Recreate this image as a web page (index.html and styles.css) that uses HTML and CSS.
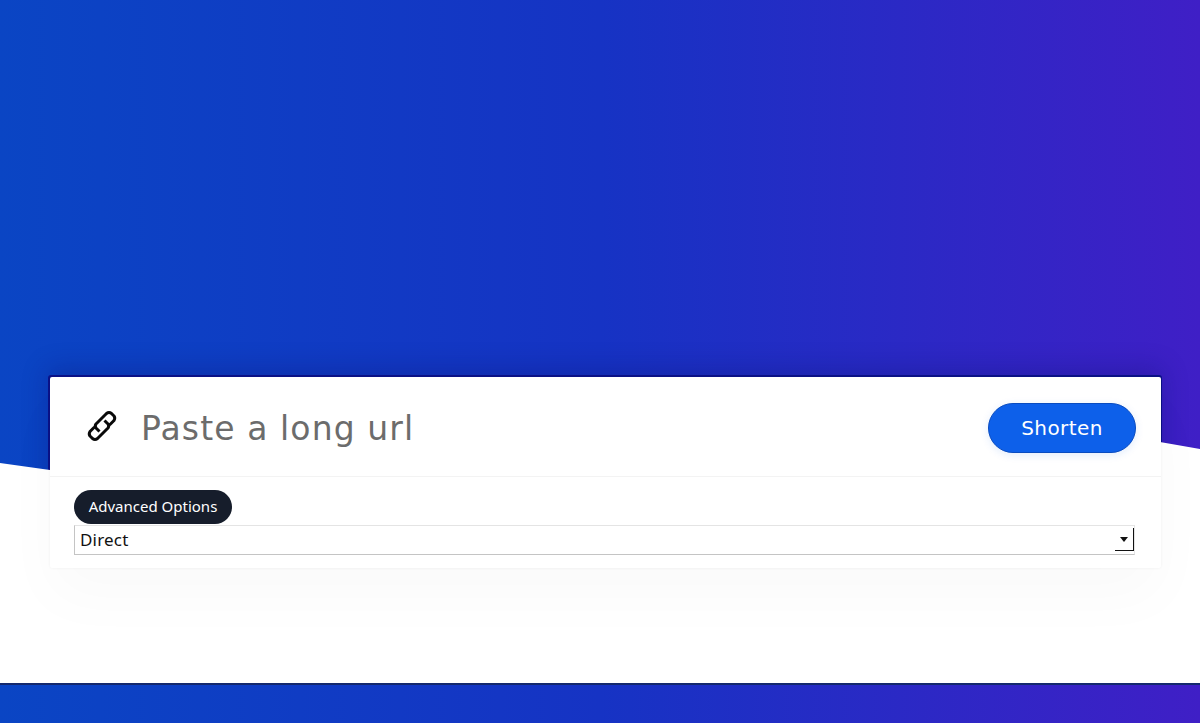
FILE: index.html
```html
<!DOCTYPE html>
<html lang="en">
<head>
    <meta charset="UTF-8">
    <meta name="viewport" content="width=device-width, initial-scale=1.0">
    <title>Shorten</title>
    <link rel="stylesheet" href="styles.css">
</head>
<body>
    <section class="hero">
        <span class="card-edge"></span>
        <svg class="wave" viewBox="0 0 1200 221" aria-hidden="true">
            <path d="M0 1 L50 8 C 300 40 900 -40 1160 -20 L1200 -13 L1200 221 L0 221 Z"/>
        </svg>
        <form class="card">
            <div class="url-row">
                <svg class="link-icon" viewBox="0 0 36 36" aria-hidden="true">
                    <path d="M25.5 17 L30 12.5 Q31.5 10 30 8 L27.5 5.5 Q25 3.5 22.5 5.5 L12 16 Q10.5 18 12 20 L15.5 23.5"/>
                    <path d="M10.5 19 L6 23.5 Q4.5 26 6 28 L8.5 30.5 Q11 32.5 13.5 30.5 L24 20 Q25.5 18 24 16 L20.5 12.5"/>
                </svg>
                <input class="url-input" type="text" placeholder="Paste a long url">
                <button class="shorten-btn" type="button">Shorten</button>
            </div>
            <div class="options">
                <button class="advanced-btn" type="button">Advanced Options</button>
                <div class="select-wrap">
                    <select class="type-select">
                        <option>Direct</option>
                    </select>
                    <span class="select-arrow"></span>
                </div>
            </div>
        </form>
    </section>
    <footer class="footer"></footer>
</body>
</html>
```

FILE: styles.css
```css
html, body {
    margin: 0;
    padding: 0;
}

body {
    height: 723px;
    overflow: hidden;
    background-color: white;
    font-family: "Noto Sans", sans-serif;
}

.hero {
    position: relative;
    height: 683px;
    box-sizing: border-box;
    padding: 377px 39px 0 50px;
    background: linear-gradient(90deg, #0a45c4 0%, #1633c4 50%, #3f1fc6 100%);
}

/* dark rim round the card, only shows over the blue */
.card-edge {
    position: absolute;
    left: 48px;
    top: 375px;
    width: 1114px;
    height: 120px;
    border-radius: 3px;
    background-color: #0c1288;
    box-shadow: 0 -6px 26px rgba(10, 15, 110, 0.3);
}

.wave {
    position: absolute;
    left: 0;
    top: 462px;
    width: 1200px;
    height: 221px;
    overflow: visible;
    fill: white;
}

.card {
    position: relative;
    height: 191px;
    box-sizing: border-box;
    background-color: white;
    border-radius: 2px;
    box-shadow: 0 0 3px rgba(0, 0, 0, 0.06), 0 30px 60px rgba(0, 0, 0, 0.025);
}

.url-row {
    display: flex;
    align-items: center;
    height: 100px;
    box-sizing: border-box;
    padding: 3px 25px 0 34px;
    border-bottom: 1px solid #f3f3f3;
}

.link-icon {
    width: 36px;
    height: 36px;
    flex: none;
    margin-top: -4px;
    fill: none;
    stroke: #0a0a0a;
    stroke-width: 3;
    stroke-linecap: butt;
    stroke-linejoin: round;
}

.url-input {
    flex: 1;
    min-width: 0;
    margin-left: 21px;
    padding: 0;
    border: none;
    outline: none;
    font-family: "DejaVu Sans", sans-serif;
    font-size: 33px;
    letter-spacing: 1.1px;
    color: #333;
}

.url-input::placeholder {
    color: #6c6c6c;
    opacity: 1;
}

.shorten-btn {
    width: 148px;
    height: 50px;
    flex: none;
    padding: 0 0 1px;
    border: 1px solid #0a4cc0;
    border-radius: 25px;
    background-color: #0d60ea;
    color: white;
    font-family: "DejaVu Sans", sans-serif;
    font-size: 20px;
    letter-spacing: 0.4px;
    box-shadow: 0 2px 8px rgba(13, 96, 234, 0.12);
}

.options {
    padding: 13px 26px 0 24px;
}

.advanced-btn {
    display: block;
    width: 158px;
    height: 34px;
    padding: 0 0 2px;
    border: none;
    border-radius: 17px;
    background-color: #161d2b;
    color: white;
    font-family: "Noto Sans", sans-serif;
    font-size: 15px;
}

.select-wrap {
    position: relative;
    margin-top: 1px;
}

.type-select {
    display: block;
    width: 100%;
    height: 30px;
    padding: 0 5px 2px;
    border: 1px solid #c4c4c4;
    border-top-color: #e4e4e4;
    border-right-color: #e4e4e4;
    border-radius: 0;
    background-color: white;
    color: #111;
    font-family: "Noto Sans", sans-serif;
    font-size: 17px;
    letter-spacing: 0.2px;
    appearance: none;
}

.select-arrow {
    position: absolute;
    right: 1px;
    top: 3px;
    width: 18px;
    height: 22px;
    background-color: white;
    border-right: 1px solid #111;
    border-bottom: 1px solid #111;
    pointer-events: none;
}

.select-arrow::after {
    content: "";
    position: absolute;
    left: 5px;
    top: 9px;
    border-left: 4px solid transparent;
    border-right: 4px solid transparent;
    border-top: 5px solid #111;
}

.footer {
    height: 40px;
    box-sizing: border-box;
    border-top: 2px solid #14296e;
    background: linear-gradient(90deg, #0a45c4 0%, #1633c4 50%, #3f1fc6 100%);
}
```
